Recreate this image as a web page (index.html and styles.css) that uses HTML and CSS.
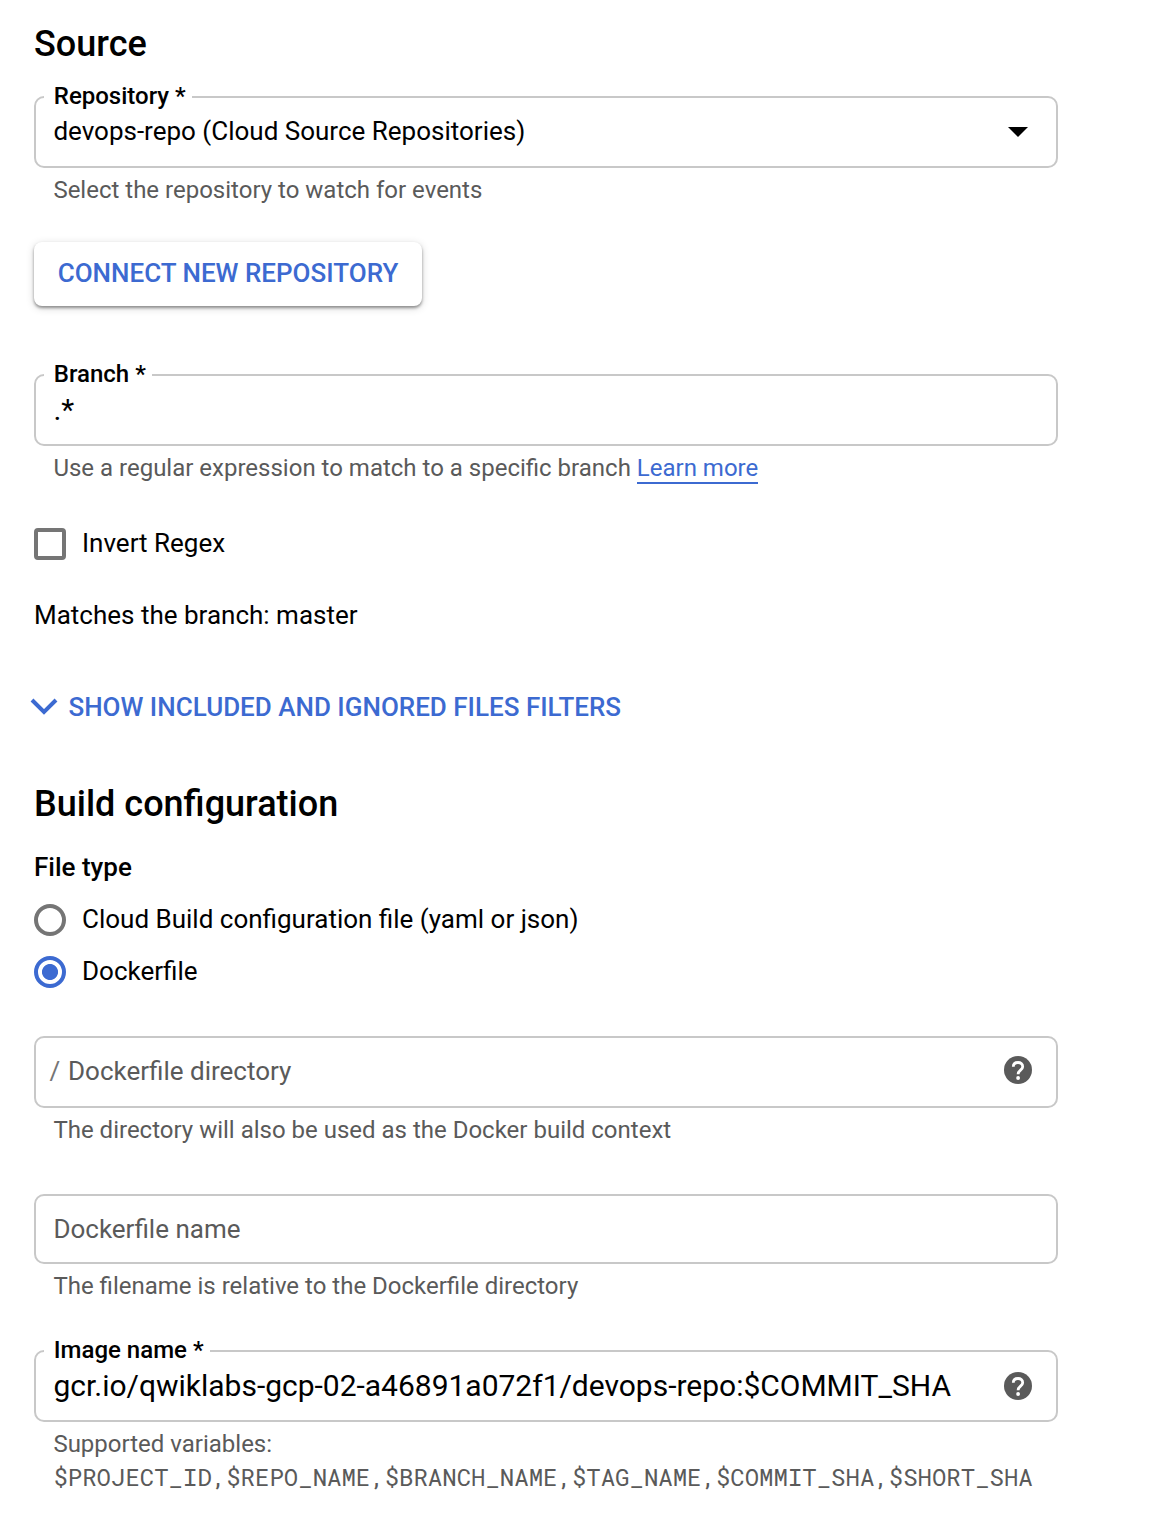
FILE: index.html
```html
<!DOCTYPE html>
<html lang="en">
<head>
<meta charset="utf-8">
<title>Create trigger</title>
<link rel="stylesheet" href="styles.css">
</head>
<body>
<main class="form">
  <h2 class="heading">Source</h2>
  <fieldset class="field field-repo">
    <legend class="legend">Repository *</legend>
    <div class="value value-select">
      <span>devops-repo (Cloud Source Repositories)</span>
      <svg class="caret" viewBox="0 0 20 10"><path d="M0 0h20L10 10z"/></svg>
    </div>
  </fieldset>
  <p class="hint">Select the repository to watch for events</p>
  <button class="connect" type="button">CONNECT NEW REPOSITORY</button>

  <fieldset class="field field-branch">
    <legend class="legend">Branch *</legend>
    <div class="value value-input"><span>.*</span></div>
  </fieldset>
  <p class="hint">Use a regular expression to match to a specific branch <a class="link">Learn more</a></p>
  <label class="option option-invert"><span class="checkbox"></span><span>Invert Regex</span></label>
  <p class="matches">Matches the branch: master</p>
  <div class="expander">
    <svg class="chevron" viewBox="0 0 28 18"><path d="M2 2l12 12L26 2"/></svg>
    <span>SHOW INCLUDED AND IGNORED FILES FILTERS</span>
  </div>

  <h2 class="heading heading-build">Build configuration</h2>
  <h3 class="subheading">File type</h3>
  <div class="options">
    <label class="option"><span class="radio"></span><span>Cloud Build configuration file (yaml or json)</span></label>
    <label class="option"><span class="radio radio-on"></span><span>Dockerfile</span></label>
  </div>

  <div class="box box-directory">
    <span class="slash">/</span><span class="directory">Dockerfile directory</span>
    <svg class="help" viewBox="0 0 28 28"><circle class="help-disc" cx="14" cy="14" r="14"/><path class="help-hook" d="M9.3 10.7C9.3 8 11.3 6.5 14 6.5s4.7 1.6 4.7 4.2c0 3.3-4.6 3.7-4.6 7.5"/><circle class="help-dot" cx="14.1" cy="22" r="1.9"/></svg>
  </div>
  <p class="hint">The directory will also be used as the Docker build context</p>
  <div class="box box-name">Dockerfile name</div>
  <p class="hint">The filename is relative to the Dockerfile directory</p>

  <fieldset class="field field-image">
    <legend class="legend">Image name *</legend>
    <div class="value value-input">
      <span class="image-path">gcr.io/qwiklabs-gcp-02-a46891a072f1/devops-repo:$COMMIT_SHA</span>
      <svg class="help" viewBox="0 0 28 28"><circle class="help-disc" cx="14" cy="14" r="14"/><path class="help-hook" d="M9.3 10.7C9.3 8 11.3 6.5 14 6.5s4.7 1.6 4.7 4.2c0 3.3-4.6 3.7-4.6 7.5"/><circle class="help-dot" cx="14.1" cy="22" r="1.9"/></svg>
    </div>
  </fieldset>
  <p class="hint">Supported variables:</p>
  <code class="variables">$PROJECT_ID,$REPO_NAME,$BRANCH_NAME,$TAG_NAME,$COMMIT_SHA,$SHORT_SHA</code>
</main>
</body>
</html>
```
FILE: styles.css
```css
* { box-sizing: border-box; }
body {
  margin: 0;
  background: #fff;
  color: #000;
  font: 26px/30px Roboto, "Liberation Sans", sans-serif;
  white-space: nowrap;
}
h2, h3, p { margin: 0; }
.form {
  display: flex;
  flex-direction: column;
  width: 1058px;
  padding: 23px 0 0 34px;
}
.heading { font-size: 36px; font-weight: 500; line-height: 42px; }
.heading-build { margin-top: 58px; }
.subheading { margin-top: 27px; font-size: 26px; font-weight: 500; line-height: 30px; }

/* Outlined field whose label sits in a notch of the border */
.field {
  height: 85px;
  min-width: 0;
  margin: 0;
  padding: 0 24px 0 8px;
  border: 2px solid #c8c8c8;
  border-radius: 10px;
}
.field-repo { margin-top: 18px; }
.field-branch { margin-top: 55px; }
.field-image { margin-top: 37px; }
.legend {
  padding: 0 6.5px 2px 9.8px;
  font-size: 24px;
  font-weight: 500;
  line-height: 26px;
}
.value {
  display: flex;
  align-items: center;
  justify-content: space-between;
  padding-left: 9.4px;
}
.value-select { height: 40px; padding-right: 4px; }
.value-input { height: 42px; font-size: 30px; }
.value-input .help { margin-bottom: -8px; transform: translateY(-4px); }
.image-path { letter-spacing: -.01px; }
.caret { width: 20px; height: 10px; margin-top: 2px; }

.hint {
  margin-top: 8px;
  padding-left: 19.4px;
  color: #5a5a5a;
  font-size: 24px;
  line-height: 28px;
}
.link { color: #3c6ad1; border-bottom: 2px solid #3c6ad1; }
.connect {
  align-self: flex-start;
  width: 388px;
  height: 64px;
  margin-top: 38px;
  padding: 0 0 2px;
  border: 0;
  border-radius: 8px;
  background: #fff;
  box-shadow: 0 2px 3px rgba(0, 0, 0, .38), 0 2px 8px rgba(0, 0, 0, .16);
  color: #3c6ad1;
  font: 500 26px/30px Roboto, "Liberation Sans", sans-serif;
}

.options { display: flex; flex-direction: column; gap: 20px; margin-top: 22px; }
.option { display: flex; gap: 16px; height: 32px; }
.option-invert { margin-top: 46px; }
.checkbox, .radio { width: 32px; height: 32px; border: 4px solid #757575; }
.checkbox { border-radius: 4px; }
.radio { border-radius: 50%; }
.radio-on {
  border-color: #3c6ad1;
  background: radial-gradient(circle, #3c6ad1 7.6px, transparent 8.4px);
}
.matches { margin-top: 37px; line-height: 36px; }
.expander {
  display: flex;
  align-items: center;
  gap: 10px;
  height: 36px;
  margin: 56px 0 0 -3.6px;
  color: #3c6ad1;
  font-weight: 500;
}
.chevron { width: 28px; height: 18px; fill: none; stroke: currentColor; stroke-width: 4; }

.box {
  display: flex;
  align-items: center;
  height: 72px;
  padding: 0 24px 0 17.4px;
  border: 2px solid #c8c8c8;
  border-radius: 10px;
  color: #5a5a5a;
}
.box-directory { margin-top: 48px; padding: 0 24px 2px 13.6px; }
.box-directory .help { margin-bottom: 2px; }
.box-name { height: 70px; margin-top: 50px; }
.slash { width: 18.4px; color: #757575; }
.help { width: 28px; height: 28px; margin-left: auto; }
.help-disc { fill: #5a5a5a; }
.help-hook { fill: none; stroke: #fff; stroke-width: 2.8; }
.help-dot { fill: #fff; }

.variables {
  margin-top: 2px;
  padding-left: 19.4px;
  color: #5a5a5a;
  font: 24px/34px "Roboto Mono", "Liberation Mono", monospace;
}
```
